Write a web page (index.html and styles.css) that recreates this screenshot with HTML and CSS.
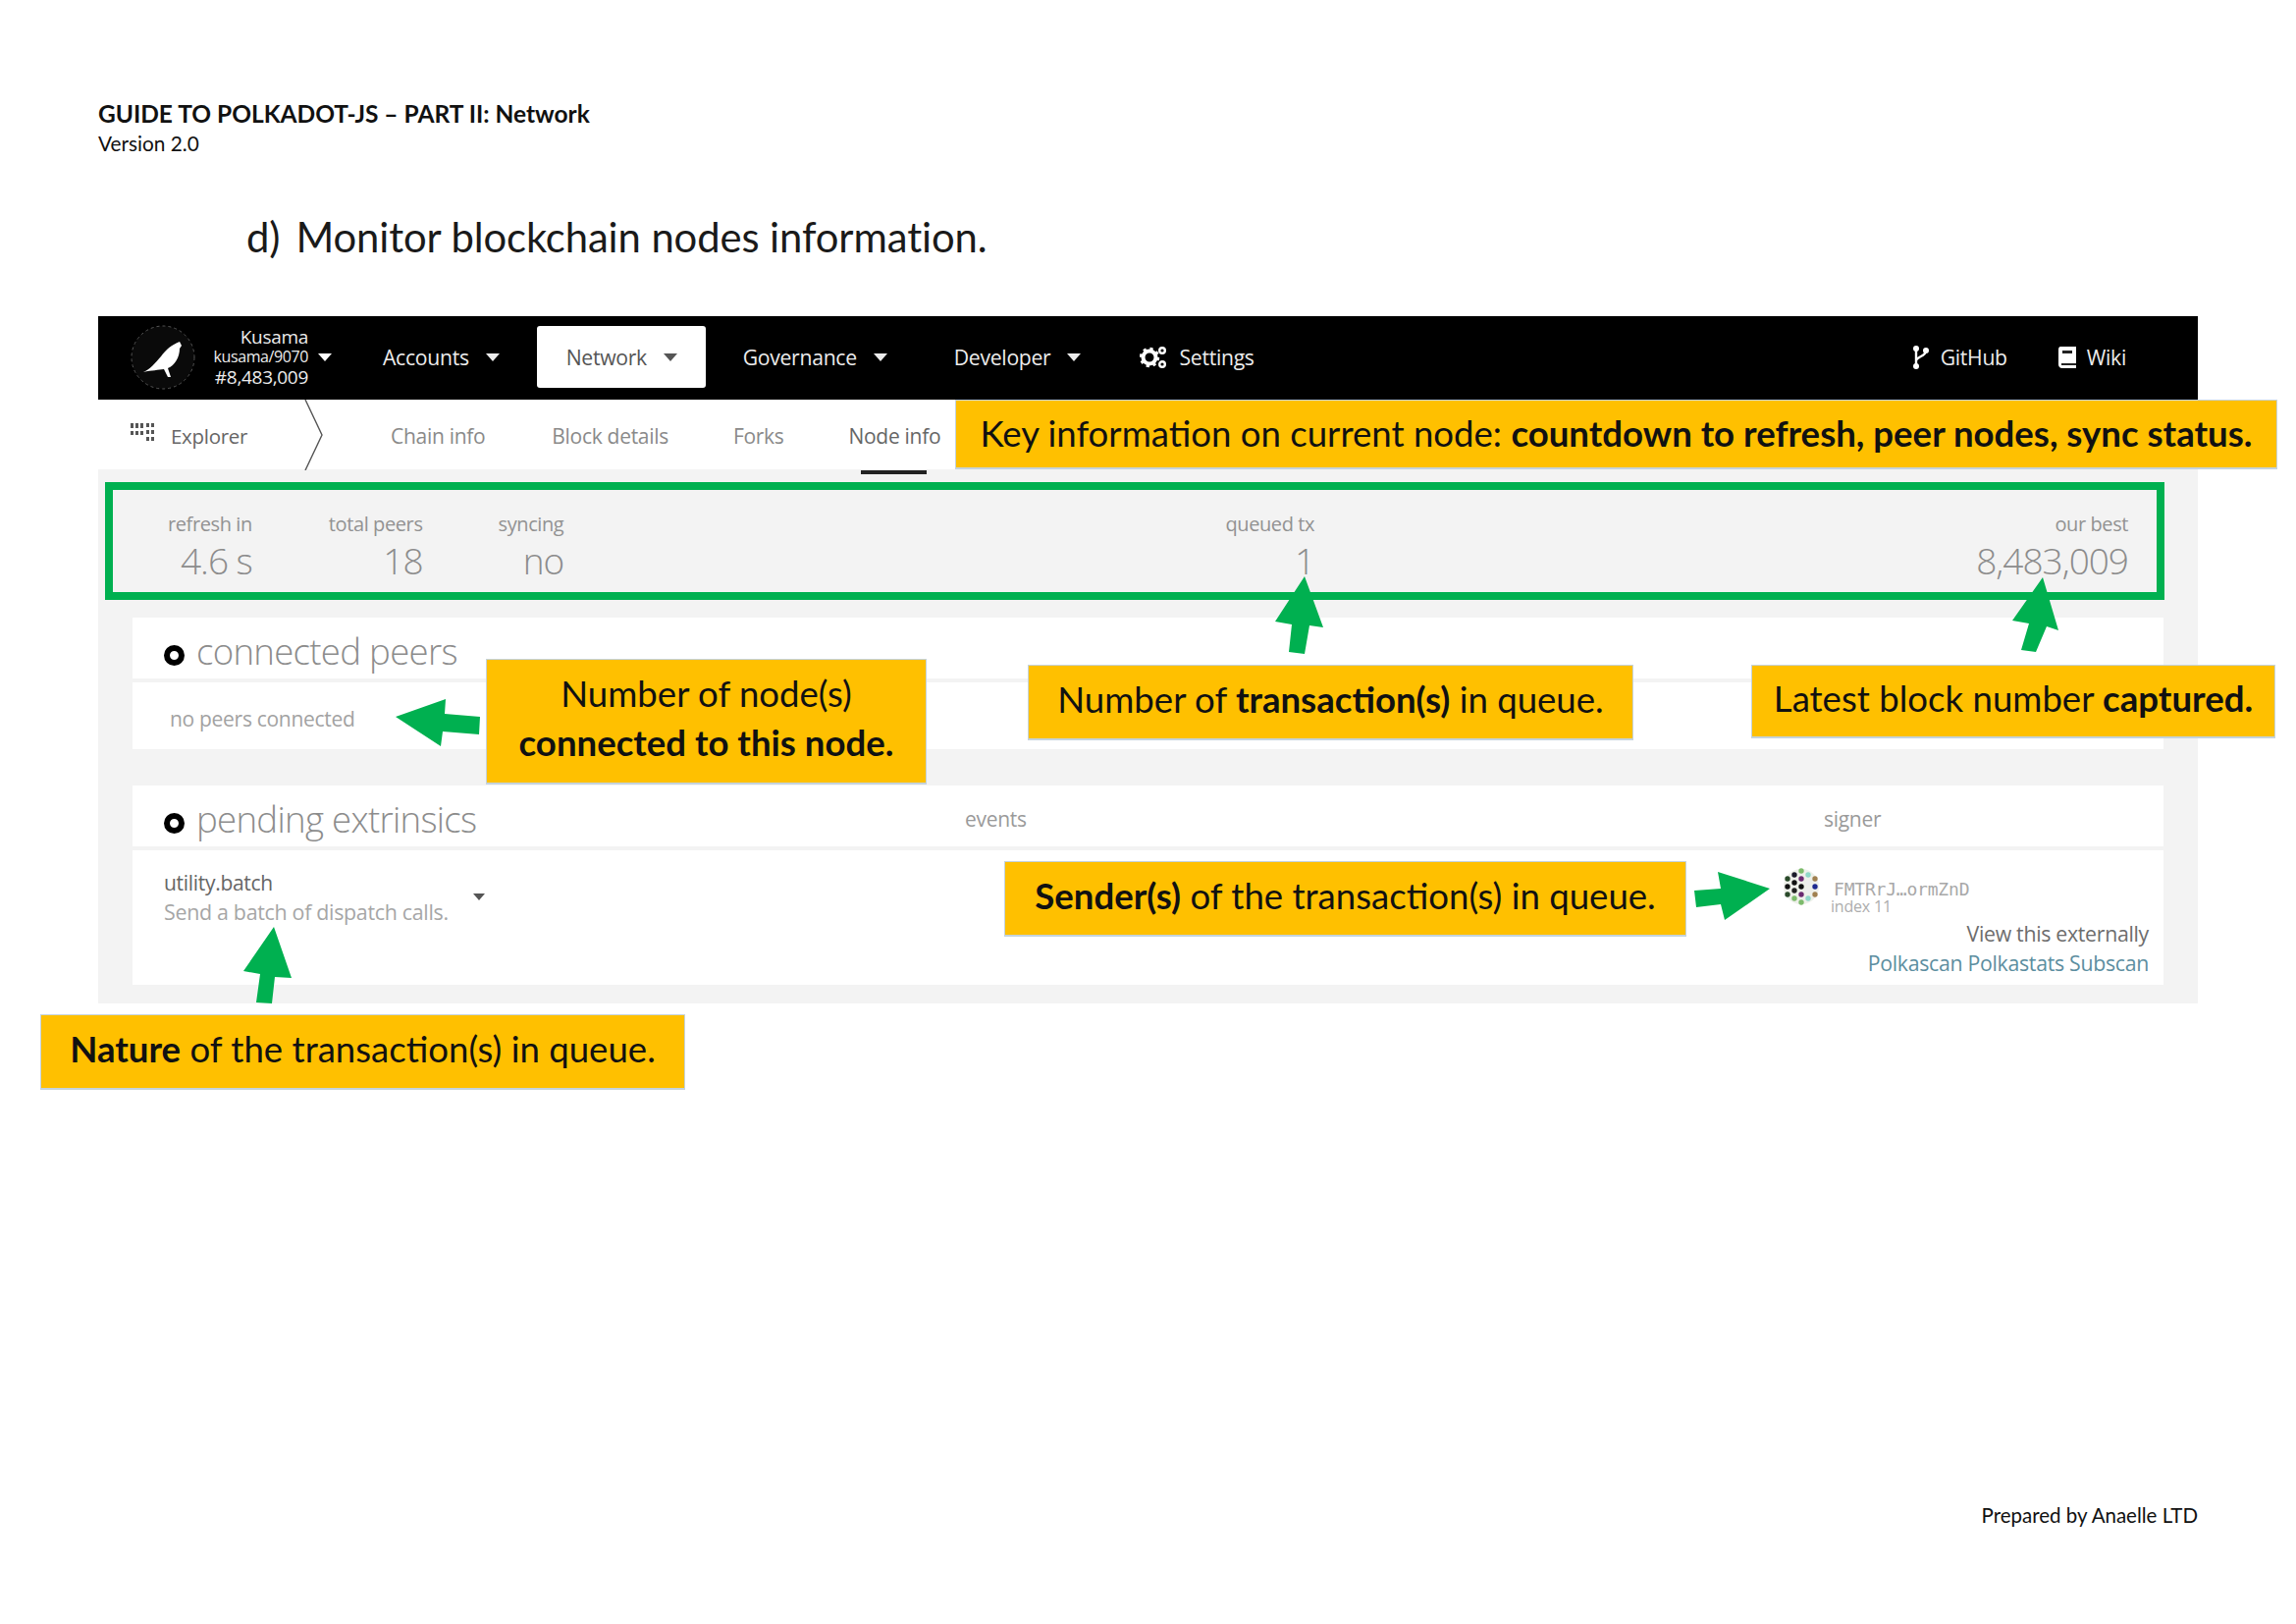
FILE: index.html
```html
<!DOCTYPE html>
<html lang="en">
<head>
<meta charset="utf-8">
<title>Guide to Polkadot-JS</title>
<link rel="stylesheet" href="styles.css">
</head>
<body>
<div class="page">
  <header class="doc-head">
    <div class="doc-title">GUIDE TO POLKADOT-JS – PART II: Network</div>
    <div class="doc-version">Version 2.0</div>
  </header>
  <h1 class="section-title"><span>d)</span><span>Monitor blockchain nodes information.</span></h1>

  <main class="app">
    <nav class="topbar">
      <svg class="logo" viewBox="0 0 66 68"><circle cx="33" cy="34" r="32" fill="#0a0a0a" stroke="#555" stroke-width="1" stroke-dasharray="3 3"/><path d="M13 49 C20 46 25 40 31 33 C36 26 42 21 50 18 L52 22 L50 25 C50 34 45 42 38 45 L41 54 L38 54 L34 46 C28 47 22 47 13 49Z" fill="#fff"/></svg>
      <div class="chain">
        <div class="chain-name">Kusama</div>
        <div class="chain-node">kusama/9070</div>
        <div class="chain-block">#8,483,009</div>
      </div>
      <i class="caret caret-chain"></i>
      <a class="menu menu-accounts">Accounts<i class="caret"></i></a>
      <a class="menu menu-network active">Network<i class="caret"></i></a>
      <a class="menu menu-gov">Governance<i class="caret"></i></a>
      <a class="menu menu-dev">Developer<i class="caret"></i></a>
      <a class="menu menu-settings">
        <svg class="icon-cogs" viewBox="0 0 28 24"><circle cx="10" cy="12" r="6.5" fill="none" stroke="#fff" stroke-width="4"/><circle cx="10" cy="12" r="9" fill="none" stroke="#fff" stroke-width="2.4" stroke-dasharray="3.2 3.9"/><circle cx="23" cy="5" r="2.8" fill="none" stroke="#fff" stroke-width="2.4"/><circle cx="23" cy="19" r="2.8" fill="none" stroke="#fff" stroke-width="2.4"/></svg>
        Settings</a>
      <a class="menu menu-github">
        <svg class="icon-branch" viewBox="0 0 18 26"><circle cx="4" cy="4" r="3" fill="#fff"/><circle cx="14" cy="6" r="3" fill="#fff"/><circle cx="4" cy="22" r="3" fill="#fff"/><path d="M4 4V22M14 6C14 12 5 12 4 16" stroke="#fff" stroke-width="2.4" fill="none"/></svg>
        GitHub</a>
      <a class="menu menu-wiki">
        <svg class="icon-book" viewBox="0 0 18 22"><path d="M2 0H18V22H4C1 22 0 20 0 18V3C0 1 1 0 2 0Z" fill="#fff"/><rect x="4" y="4" width="10" height="3" fill="#222"/><rect x="3" y="17" width="15" height="2" fill="#222"/></svg>
        Wiki</a>
    </nav>

    <div class="subnav">
      <svg class="icon-grid" viewBox="0 0 24 18"><g fill="#555"><rect x="0" y="0" width="3" height="5"/><rect x="5" y="0" width="3" height="5"/><rect x="10" y="0" width="3" height="5"/><rect x="16" y="0" width="3" height="4"/><rect x="21" y="0" width="3" height="4"/><rect x="0" y="8" width="3" height="4"/><rect x="5" y="8" width="3" height="4"/><rect x="10" y="8" width="3" height="4"/><rect x="16" y="7" width="3" height="4"/><rect x="21" y="7" width="3" height="4"/><rect x="16" y="14" width="3" height="4"/><rect x="21" y="14" width="3" height="4"/></g></svg>
      <span class="sub-explorer">Explorer</span>
      <svg class="chevron" viewBox="0 0 20 72"><path d="M1 0L18 36L1 72" fill="none" stroke="#555" stroke-width="1.4"/></svg>
      <a class="tab tab-chain">Chain info</a>
      <a class="tab tab-block">Block details</a>
      <a class="tab tab-forks">Forks</a>
      <a class="tab tab-node active">Node info</a>
    </div>

    <section class="content">
      <div class="summary">
        <div class="stat stat-refresh"><label>refresh in</label><b>4.6 s</b></div>
        <div class="stat stat-peers"><label>total peers</label><b>18</b></div>
        <div class="stat stat-sync"><label>syncing</label><b>no</b></div>
        <div class="stat stat-queued"><label>queued tx</label><b>1</b></div>
        <div class="stat stat-best"><label>our best</label><b>8,483,009</b></div>
      </div>

      <div class="card card-peers">
        <div class="card-head"><h2 class="card-title"><i class="bullet"></i>connected peers</h2></div>
        <div class="card-row row-peers">no peers connected</div>
      </div>

      <div class="card card-pending">
        <div class="card-head head-grid">
          <h2 class="card-title"><i class="bullet"></i>pending extrinsics</h2>
          <span class="col-label">events</span>
          <span class="col-label">signer</span>
        </div>
        <div class="card-row row-pending">
          <div class="extrinsic">
            <div class="ex-text">
              <div class="ex-name">utility.batch</div>
              <div class="ex-desc">Send a batch of dispatch calls.</div>
            </div>
            <i class="caret caret-dark"></i>
          </div>
          <div class="events"></div>
          <div class="signer">
            <div class="signer-id">
              <svg class="identicon" viewBox="0 0 36 40">
                <circle cx="18" cy="20" r="18" fill="#eef0ea"/>
                <g>
                  <circle cx="18" cy="4" r="2.7" fill="#7dbb6c"/><circle cx="11" cy="8" r="2.7" fill="#1a1a2a"/><circle cx="25" cy="8" r="2.7" fill="#8fd8c8"/>
                  <circle cx="4" cy="12" r="2.7" fill="#2a4a2a"/><circle cx="18" cy="12" r="2.7" fill="#6a2a70"/><circle cx="32" cy="12" r="2.7" fill="#a08050"/>
                  <circle cx="11" cy="16" r="2.7" fill="#111"/><circle cx="25" cy="16" r="2.7" fill="#eee"/><circle cx="4" cy="20" r="2.7" fill="#111"/>
                  <circle cx="18" cy="20" r="2.7" fill="#111"/><circle cx="32" cy="20" r="2.7" fill="#1e2a90"/><circle cx="11" cy="24" r="2.7" fill="#222"/>
                  <circle cx="25" cy="24" r="2.7" fill="#eee"/><circle cx="4" cy="28" r="2.7" fill="#2a4a2a"/><circle cx="18" cy="28" r="2.7" fill="#6a2a70"/>
                  <circle cx="32" cy="28" r="2.7" fill="#a08050"/><circle cx="11" cy="32" r="2.7" fill="#7dbb6c"/><circle cx="25" cy="32" r="2.7" fill="#8fd8c8"/><circle cx="18" cy="36" r="2.7" fill="#7dbb6c"/>
                </g>
              </svg>
              <div class="signer-text">
                <div class="signer-addr">FMTRrJ…ormZnD</div>
                <div class="signer-index">index 11</div>
              </div>
            </div>
            <div class="external">
              <div class="ext-title">View this externally</div>
              <div class="ext-links"><a>Polkascan</a> <a>Polkastats</a> <a>Subscan</a></div>
            </div>
          </div>
        </div>
      </div>
    </section>
  </main>

  <footer class="doc-foot">Prepared by Anaelle LTD</footer>

  <svg class="arrows" viewBox="0 0 2339 1654">
    <g fill="#00b050">
      <polygon points="1329,587 1348,639 1334,637 1329,666 1313,664 1316,636 1299,633"/>
      <polygon points="2081,588 2097,642 2085,638 2074,664 2059,662 2067,635 2050,632"/>
      <polygon points="403,730 454,712 453,727 489,730 488,748 451,745 449,760"/>
      <polygon points="279,944 297,996 280,995 277,1022 261,1021 265,992 248,989"/>
      <polygon points="1803,905 1750,888 1753,905 1726,907 1728,924 1753,921 1757,937"/>
    </g>
  </svg>

  <div class="note note-key">Key information on current node:&nbsp;<b>countdown to refresh, peer nodes, sync status.</b></div>
  <div class="note note-peers"><span>Number of node(s)</span><b>connected to this node.</b></div>
  <div class="note note-tx">Number of&nbsp;<b>transaction(s)</b>&nbsp;in queue.</div>
  <div class="note note-block">Latest block number&nbsp;<b>captured.</b></div>
  <div class="note note-sender"><b>Sender(s)</b>&nbsp;of the transaction(s) in queue.</div>
  <div class="note note-nature"><b>Nature</b>&nbsp;of the transaction(s) in queue.</div>
</div>
</body>
</html>
```
FILE: styles.css
```css
* { box-sizing: border-box; }
html, body { margin: 0; padding: 0; background: #fff; }
body { font-family: "Lato", "Liberation Sans", sans-serif; color: #111; }
.page { position: relative; width: 2339px; height: 1654px; padding: 101px 100px 0; display: flex; flex-direction: column; overflow: hidden; }

.doc-title { font-size: 24.5px; font-weight: 700; line-height: 30px; }
.doc-version { font-size: 20.8px; line-height: 28px; margin-top: 1px; }
.section-title { margin: 53px 0 0 151px; font-size: 41.8px; line-height: 56px; font-weight: 400; display: flex; gap: 16px; letter-spacing: -0.1px; color: #1a1a1a; }

.app { margin-top: 53px; font-family: "Open Sans", "Liberation Sans", sans-serif; }
.topbar { height: 85px; background: #000; color: #ececec; display: flex; align-items: center; padding: 0 0 2px 33px; position: relative; }
.logo { width: 66px; height: 68px; flex: none; }
.chain { width: 115px; text-align: right; font-size: 16px; line-height: 20px; letter-spacing: -0.4px; }
.chain-name { font-size: 19px; letter-spacing: -0.3px; }
.chain-block { font-size: 19px; line-height: 22px; letter-spacing: -0.3px; }
.caret { display: inline-block; width: 0; height: 0; border-left: 7px solid transparent; border-right: 7px solid transparent; border-top: 8px solid currentColor; margin-left: 17px; vertical-align: 3px; }
.caret-chain { color: #fff; margin-left: 10px; flex: none; }
.menu { font-size: 21.2px; letter-spacing: -0.3px; display: flex; align-items: center; flex: none; }
.menu-accounts { margin-left: 52px; }
.menu-network { margin-left: 38px; height: 63px; width: 172px; padding-left: 30px; background: #fff; color: #555; border-radius: 3px; }
.menu-gov { margin-left: 38px; }
.menu-dev { margin-left: 68px; }
.menu-settings { margin-left: 60px; }
.icon-cogs { width: 28px; height: 24px; margin-right: 12px; }
.menu-github { margin-left: auto; }
.icon-branch { width: 18px; height: 26px; margin-right: 11px; }
.menu-wiki { margin-left: 52px; margin-right: 73px; }
.icon-book { width: 18px; height: 22px; margin-right: 11px; }

.subnav { height: 71px; background: #fff; display: flex; align-items: center; padding: 2px 0 0 33px; font-size: 21px; letter-spacing: -0.3px; color: #8a8a8a; position: relative; }
.icon-grid { width: 24px; height: 18px; margin-top: -7px; flex: none; }
.sub-explorer { margin-left: 17px; color: #666; font-size: 20.5px; }
.chevron { width: 20px; height: 72px; margin: -2px 0 0 58px; flex: none; }
.tab { flex: none; }
.tab-chain { margin-left: 68px; }
.tab-block { margin-left: 68px; }
.tab-forks { margin-left: 66px; }
.tab-node { margin-left: 66px; color: #666; position: relative; }
.tab-node::after { content: ""; position: absolute; left: 12px; right: 14px; bottom: -25px; height: 4px; background: #222; }

.content { background: #f3f3f3; padding: 13px 35px 19px; height: 544px; }
.summary { margin-left: -28px; width: 2098px; height: 120px; border: 8px solid #00b050; display: flex; padding: 21px 29px 0 56px; color: #888; }
.stat { display: flex; flex-direction: column; align-items: flex-end; flex: none; }
.stat label { font-size: 20px; line-height: 27px; letter-spacing: -0.4px; color: #929292; }
.stat b { font-size: 37px; line-height: 50px; margin-top: -1px; font-weight: 300; letter-spacing: -1px; color: #8c8c8c; }
.stat-peers { margin-left: 78px; }
.stat-sync { margin-left: 77px; }
.stat-queued, .stat-best { margin-left: auto; }

.card { background: #fff; width: 2069px; }
.card-peers { margin-top: 18px; }
.card-pending { margin-top: 37px; }
.card-head { height: 66px; border-bottom: 4px solid #f3f3f3; display: flex; align-items: center; padding: 6px 0 0 32px; }
.card-title { margin: 0; font-size: 36.6px; font-weight: 300; letter-spacing: -0.7px; color: #8c8c8c; display: flex; align-items: center; flex: none; }
.bullet { width: 21px; height: 21px; border-radius: 50%; border: 6.5px solid #000; background: #fff; margin-right: 12px; margin-top: 9px; flex: none; }
.head-grid { display: grid; grid-template-columns: 816px 875px 1fr; }
.col-label { font-size: 21px; letter-spacing: -0.3px; color: #9a9a9a; }
.card-row { font-size: 21px; letter-spacing: -0.3px; color: #a2a2a2; }
.row-peers { height: 68px; padding: 23px 0 0 38px; }
.row-pending { height: 137px; display: grid; grid-template-columns: 848px 835px 1fr; }
.extrinsic { display: flex; padding: 19px 0 0 32px; }
.ex-name { line-height: 29px; color: #666; }
.ex-desc { font-size: 21.4px; line-height: 29px; color: #a6a6a6; }
.caret-dark { color: #555; margin: 25px 0 0 25px; border-left-width: 6px; border-right-width: 6px; border-top-width: 7px; }
.signer { padding-top: 17px; }
.signer-id { display: flex; }
.identicon { width: 36px; height: 40px; margin-left: -1px; flex: none; }
.signer-text { padding-top: 14px; margin-left: 12px; }
.signer-addr { font-family: "DejaVu Sans Mono", monospace; font-size: 18px; line-height: 18px; letter-spacing: -0.2px; color: #a8a8a8; margin-left: 3px; }
.signer-index { font-size: 16px; line-height: 17px; color: #adadad; letter-spacing: -0.2px; }
.external { text-align: right; width: 371px; margin-top: 4px; font-size: 21.3px; color: #666; line-height: 30px; }
.ext-title { color: #6d6d6d; }
.ext-links { color: #5c8ea0; }

.doc-foot { margin-top: auto; margin-bottom: 98px; align-self: flex-end; font-size: 20.5px; line-height: 26px; }

.arrows { position: absolute; left: 0; top: 0; width: 2339px; height: 1654px; pointer-events: none; }
.note { position: absolute; background: #ffc000; border: 1px solid #c5d3dc; border-width: 1px 1px 2px 1px; display: flex; align-items: center; justify-content: center; padding-bottom: 7px; font-size: 36.6px; color: #111; white-space: nowrap; }
.note b { font-weight: 700; }
.note-key { left: 973px; top: 407px; width: 1347px; height: 71px; padding-bottom: 3px; }
.note-peers { left: 495px; top: 671px; width: 449px; height: 128px; flex-direction: column; line-height: 50px; }
.note-tx { left: 1047px; top: 677px; width: 617px; height: 77px; }
.note-block { left: 1784px; top: 677px; width: 534px; height: 75px; }
.note-sender { left: 1023px; top: 877px; width: 695px; height: 77px; }
.note-nature { left: 41px; top: 1033px; width: 657px; height: 77px; }
```
